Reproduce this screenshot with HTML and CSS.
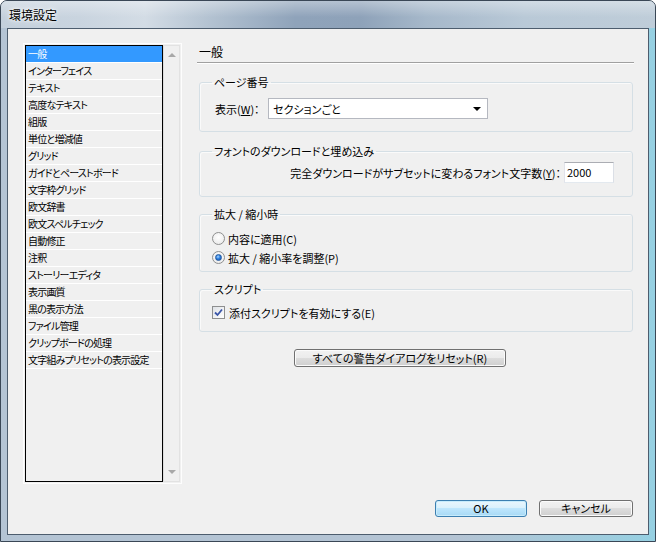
FILE: index.html
```html
<!DOCTYPE html>
<html lang="ja">
  <head>
    <meta charset="UTF-8" />
    <title>環境設定</title>
    <link rel="stylesheet" href="styles.css">
  </head>
  <body>
    <div class="window">
      <div class="titlebar"><span class="title">環境設定</span></div>
      <div class="frame">
        <div class="client">
          <div class="content">
            <div class="list-frame">
              <ul class="list">
                <li class="selected">一般</li>
                <li>インターフェイス</li>
                <li>テキスト</li>
                <li>高度なテキスト</li>
                <li>組版</li>
                <li>単位と増減値</li>
                <li>グリッド</li>
                <li>ガイドとペーストボード</li>
                <li>文字枠グリッド</li>
                <li>欧文辞書</li>
                <li>欧文スペルチェック</li>
                <li>自動修正</li>
                <li>注釈</li>
                <li>ストーリーエディタ</li>
                <li>表示画質</li>
                <li>黒の表示方法</li>
                <li>ファイル管理</li>
                <li>クリップボードの処理</li>
                <li>文字組みプリセットの表示設定</li>
              </ul>
              <div class="scroll">
                <span class="arrow up"></span>
                <span class="arrow down"></span>
              </div>
            </div>

            <div class="panel">
              <h1 class="heading">一般</h1>

              <fieldset class="group g-page">
                <legend>ページ番号</legend>
                <div class="row">
                  <span class="field-label">表示(<u>W</u>)：</span>
                  <div class="select">
                    <span>セクションごと</span>
                    <span class="caret"></span>
                  </div>
                </div>
              </fieldset>

              <fieldset class="group g-font">
                <legend>フォントのダウンロードと埋め込み</legend>
                <div class="row right">
                  <span>完全ダウンロードがサブセットに変わるフォント文字数(<u>Y</u>)：</span>
                  <div class="textbox">2000</div>
                </div>
              </fieldset>

              <fieldset class="group g-scale">
                <legend>拡大 / 縮小時</legend>
                <div class="option">
                  <span class="radio"></span>
                  <span>内容に適用(C)</span>
                </div>
                <div class="option">
                  <span class="radio checked"></span>
                  <span>拡大 / 縮小率を調整(P)</span>
                </div>
              </fieldset>

              <fieldset class="group g-script">
                <legend>スクリプト</legend>
                <div class="option">
                  <span class="checkbox">
                    <svg width="9" height="9" viewBox="0 0 9 9">
                      <path d="M1 4.5 L3.5 7 L8 1.5" fill="none" stroke="#3a55a8" stroke-width="1.8" />
                    </svg>
                  </span>
                  <span>添付スクリプトを有効にする(E)</span>
                </div>
              </fieldset>

              <button type="button" class="btn reset">すべての警告ダイアログをリセット(R)</button>
            </div>
          </div>

          <div class="footer">
            <button type="button" class="btn default">OK</button>
            <button type="button" class="btn cancel">キャンセル</button>
          </div>
        </div>
      </div>
    </div>
  </body>
</html>
```

FILE: styles.css
```css
body {
  margin: 0;
  font-family: "Noto Sans CJK JP", "Noto Sans", sans-serif;
  font-size: 11px;
  font-feature-settings: "palt";
  color: #000;
}

.window {
  width: 656px;
  height: 542px;
  box-sizing: border-box;
  border: 1px solid #3a4756;
  border-radius: 7px 7px 0 0;
  overflow: hidden;
  display: flex;
  flex-direction: column;
  background: #b7c6d5;
}

.titlebar {
  height: 27px;
  flex: none;
  padding-left: 8px;
  display: flex;
  align-items: center;
  background:
    linear-gradient(180deg, rgba(255, 255, 255, 0.35), rgba(255, 255, 255, 0) 60%),
    linear-gradient(90deg, #c4d0dc 0%, #c9d4df 12%, #d3dce5 22%, #b3c2d1 32%, #8fa3ba 45%, #8ea2b9 55%, #a6b8ca 65%, #b9c9d7 80%, #bfcdd9 100%);
}
.title {
  font-size: 12px;
  text-shadow: 0 0 6px #fff, 0 0 3px #fff;
}

.frame {
  flex: 1;
  display: flex;
  padding: 0 6px 6px;
  background:
    linear-gradient(90deg, rgba(255, 255, 255, 0) 70%, rgba(120, 220, 240, 0.5) 100%),
    #b4c4d4;
}

.client {
  flex: 1;
  display: flex;
  flex-direction: column;
  border: 1px solid #4d5d6e;
  background: #f0f0f0;
}

.content {
  display: flex;
  gap: 15px;
  padding: 14px 14px 0 15px;
}

/* category list */
.list-frame {
  width: 159px;
  height: 441px;
  flex: none;
  box-sizing: border-box;
  border: 1px solid #fdfdfd;
  padding: 1px;
  display: flex;
}
.list {
  flex: 1;
  min-width: 0;
  overflow: hidden;
  margin: 0;
  padding: 0;
  list-style: none;
  border: 1px solid #000;
}
.list li {
  height: 16px;
  line-height: 16px;
  padding-left: 2px;
  font-size: 10px;
  letter-spacing: -0.8px;
  border-bottom: 1px solid #fff;
  white-space: nowrap;
}
.list li.selected {
  background: #3399ff;
  color: #fff;
}
.scroll {
  width: 15px;
  flex: none;
  border: 1px solid #e2e2e2;
  border-left-color: #dcdcdc;
  display: flex;
  flex-direction: column;
  justify-content: space-between;
  align-items: center;
  padding: 7px 0;
}
.arrow {
  width: 0;
  height: 0;
  border-left: 4px solid transparent;
  border-right: 4px solid transparent;
}
.arrow.up {
  border-bottom: 4px solid #a8a8a8;
}
.arrow.down {
  border-top: 4px solid #a8a8a8;
}

/* right panel */
.panel {
  flex: 1;
  min-width: 0;
  display: flex;
  flex-direction: column;
  align-items: stretch;
}
.heading {
  margin: 0;
  font-size: 12px;
  font-weight: normal;
  line-height: 14px;
  padding: 2px 0 3px 2px;
  border-bottom: 1px solid #a0a0a0;
  box-shadow: 0 1px #fff;
}

.group {
  margin: 0 1px 0 2px;
  border: 1px solid #d5dfe5;
  border-radius: 3px;
  padding: 0 12px;
  box-shadow: inset 1px 1px #fafafa;
}
.group legend {
  padding: 0 2px;
  line-height: 14px;
}
.g-page {
  margin-top: 12px;
  padding-top: 9px;
  padding-bottom: 12px;
}
.g-font {
  margin-top: 12px;
  padding-top: 4px;
  padding-bottom: 13px;
  padding-right: 18px;
}
.g-scale {
  margin-top: 10px;
  padding-top: 8px;
  padding-bottom: 4px;
}
.g-script {
  margin-top: 10px;
  padding-top: 7px;
  padding-bottom: 9px;
}

.row {
  display: flex;
  align-items: center;
  height: 21px;
}
.row.right {
  justify-content: flex-end;
}
.field-label {
  width: 53px;
  padding-left: 3px;
}

.select {
  width: 220px;
  height: 21px;
  box-sizing: border-box;
  border: 1px solid #b5b8c0;
  background: #fff;
  display: flex;
  align-items: center;
  justify-content: space-between;
  padding: 0 4px;
}
.caret {
  width: 0;
  height: 0;
  border-left: 4px solid transparent;
  border-right: 4px solid transparent;
  border-top: 4px solid #000;
  margin-right: 2px;
}

.textbox {
  width: 50px;
  height: 21px;
  box-sizing: border-box;
  margin-left: 3px;
  border: 1px solid #abadb3;
  border-left-color: #e2e3ea;
  border-right-color: #dbdfe6;
  border-bottom-color: #e3e9ef;
  background: #fff;
  padding-left: 2px;
  line-height: 19px;
}

.option {
  display: flex;
  align-items: center;
  height: 19px;
  gap: 3px;
}
.radio {
  width: 11px;
  height: 11px;
  border-radius: 50%;
  border: 1px solid #8e8f8f;
  background: radial-gradient(circle at 50% 40%, #fff 0%, #e6e6e6 100%);
  display: flex;
  align-items: center;
  justify-content: center;
}
.radio.checked::after {
  content: "";
  width: 5px;
  height: 5px;
  border-radius: 50%;
  background: radial-gradient(circle at 40% 35%, #a9d6ff 0%, #2b7fe0 45%, #1a4fa4 100%);
  border: 1px solid #23589e;
}
.checkbox {
  width: 11px;
  height: 11px;
  border: 1px solid #8e8f8f;
  background: linear-gradient(135deg, #dfe2e6, #fff);
  display: flex;
  align-items: center;
  justify-content: center;
  margin-right: 1px;
}

/* buttons */
.btn {
  font: inherit;
  font-feature-settings: "palt";
  color: #000;
  height: 17px;
  padding: 0;
  line-height: 15px;
  border: 1px solid #707070;
  border-radius: 3px;
  background: linear-gradient(180deg, #f2f2f2 0%, #ebebeb 50%, #dddddd 50%, #cfcfcf 100%);
  box-shadow: inset 0 0 0 1px #fbfbfb;
}
.btn.reset {
  width: 212px;
  height: 18px;
  margin: 17px 0 0 97px;
  align-self: flex-start;
}
.btn.default {
  border-color: #3c7fb1;
  background: linear-gradient(180deg, #eaf6fd 0%, #d9f0fc 50%, #bee6fd 50%, #a7d9f5 100%);
  box-shadow: inset 0 0 0 1px #c8ecfc;
}

.footer {
  display: flex;
  justify-content: flex-end;
  gap: 12px;
  margin-top: 16px;
  padding-right: 15px;
}
.footer .btn {
  width: 92px;
}
.footer .btn.cancel {
  width: 94px;
}
```
